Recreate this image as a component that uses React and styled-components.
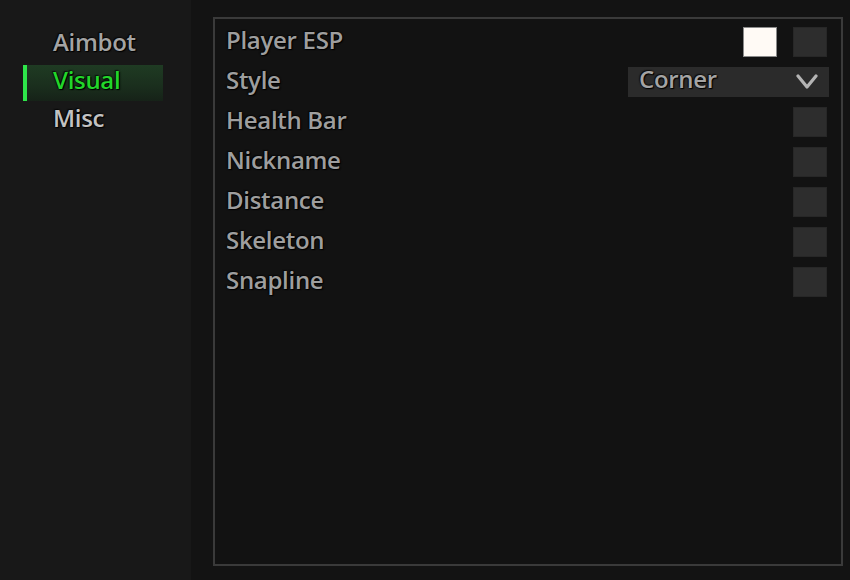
import React from "react";
import styled, { createGlobalStyle } from "styled-components";

const Global = createGlobalStyle`
  html, body { margin: 0; padding: 0; background: #131313; }
  body { font-family: "Open Sans", "Noto Sans", sans-serif; }
  * { box-sizing: border-box; }
`;

const Shell = styled.div`
  display: flex;
  width: 850px;
  height: 580px;
  background: #131313;
  overflow: hidden;
`;

const Sidebar = styled.nav`
  width: 191px;
  flex: none;
  background: #181818;
  padding: 27px 0 0 23px;
  display: flex;
  flex-direction: column;
  gap: 2px;
`;

const TextShadow = `0 0 2px #000, 1px 1px 1px #000, -1px -1px 1px rgba(0,0,0,0.6)`;

const NavItem = styled.div`
  width: 140px;
  height: 36px;
  display: flex;
  align-items: center;
  padding: 0 0 7px 26px;
  font-size: 24px;
  font-weight: 600;
  letter-spacing: -0.3px;
  line-height: 1;
  color: ${(p) => (p.$active ? "#22d62a" : p.$bright ? "#c2c2c2" : "#a4a4a4")};
  text-shadow: ${TextShadow};
  border-left: 4px solid ${(p) => (p.$active ? "#2ee64a" : "transparent")};
  background: ${(p) =>
    p.$active ? "linear-gradient(180deg, #1f3b23 0%, #1a2e1d 60%, #162218 100%)" : "transparent"};
`;

const Main = styled.main`
  flex: 1;
  padding: 17px 7px 14px 22px;
  display: flex;
`;

const Panel = styled.section`
  flex: 1;
  border: 2px solid #3a3a3a;
  background: #121212;
  padding: 8px 14px 0 11px;
  display: flex;
  flex-direction: column;
  gap: 10px;
`;

const Row = styled.div`
  height: 30px;
  display: flex;
  align-items: center;
  gap: 16px;
`;

const Label = styled.span`
  flex: 1;
  font-size: 24px;
  font-weight: 600;
  letter-spacing: -0.3px;
  line-height: 1;
  color: #9e9e9e;
  text-shadow: ${TextShadow};
  padding-bottom: 4px;
  white-space: nowrap;
`;

const Checkbox = styled.div`
  width: 34px;
  height: 30px;
  flex: none;
  background: #2d2d2d;
  border: 1px solid #272727;
`;

const Swatch = styled.div`
  width: 34px;
  height: 30px;
  flex: none;
  background: ${(p) => p.$color};
  border: 1px solid #8a8a8a;
`;

const Select = styled.div`
  width: 201px;
  height: 30px;
  margin-right: -2px;
  flex: none;
  background: #2b2b2b;
  display: flex;
  align-items: center;
  justify-content: space-between;
  padding: 0 11px 0 11px;
`;

const SelectText = styled.span`
  font-size: 24px;
  font-weight: 600;
  letter-spacing: -0.3px;
  line-height: 1;
  color: #a4a4a4;
  text-shadow: ${TextShadow};
  padding-bottom: 6px;
`;

const Chevron = () => (
  <svg width="22" height="16" viewBox="0 0 22 16">
    <polyline
      points="2,2 11,13 20,2"
      fill="none"
      stroke="#b4b4b4"
      strokeWidth="3.2"
      strokeLinecap="round"
      strokeLinejoin="round"
    />
  </svg>
);

const toggles = ["Health Bar", "Nickname", "Distance", "Skeleton", "Snapline"];

export default function App() {
  return (
    <>
      <Global />
      <Shell>
        <Sidebar>
          <NavItem>Aimbot</NavItem>
          <NavItem $active>Visual</NavItem>
          <NavItem $bright>Misc</NavItem>
        </Sidebar>
        <Main>
          <Panel>
            <Row>
              <Label>Player ESP</Label>
              <Swatch $color="#fffaf5" />
              <Checkbox />
            </Row>
            <Row>
              <Label>Style</Label>
              <Select>
                <SelectText>Corner</SelectText>
                <Chevron />
              </Select>
            </Row>
            {toggles.map((t) => (
              <Row key={t}>
                <Label>{t}</Label>
                <Checkbox />
              </Row>
            ))}
          </Panel>
        </Main>
      </Shell>
    </>
  );
}
